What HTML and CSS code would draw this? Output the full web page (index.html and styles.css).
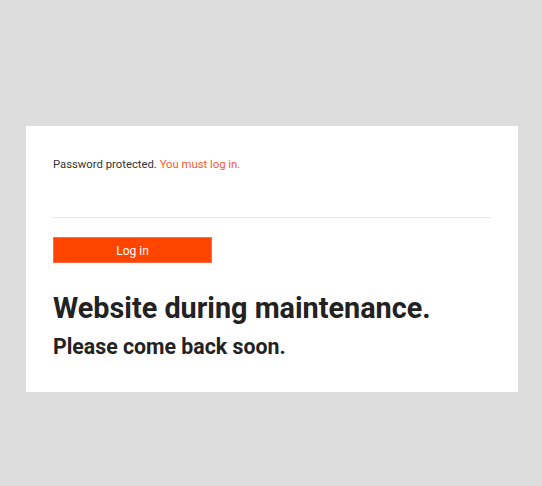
FILE: index.html
```html
<!DOCTYPE html>
<html lang="en">
<head>
    <meta charset="UTF-8">
    <meta name="viewport" content="width=device-width, initial-scale=1.0">
    <title>Maintenance</title>
    <link rel="stylesheet" href="styles.css">
</head>
<body>
    <div class="card">
        <p class="notice">Password protected. <a href="#" class="notice-link">You must log in.</a></p>
        <hr class="divider">
        <button class="login-btn">Log in</button>
        <h1>Website during maintenance.</h1>
        <h2>Please come back soon.</h2>
    </div>
</body>
</html>
```

FILE: styles.css
```css
* {
    margin: 0;
    padding: 0;
    box-sizing: border-box;
}

body {
    font-family: Roboto, 'Liberation Sans', sans-serif;
    background-color: #dddddd;
    color: #222222;
    padding: 126px 24px 0 26px;
}

.card {
    width: 492px;
    background: white;
    padding: 29px 27px 33px;
}

.notice {
    font-size: 11.3px;
    line-height: 20px;
    color: #333;
}

.notice-link {
    color: #ff5630;
    text-decoration: none;
}

.divider {
    border: none;
    border-top: 1px solid #e8e8e8;
    margin-top: 42px;
}

.login-btn {
    display: block;
    margin-top: 19px;
    width: 159px;
    height: 26px;
    padding-top: 2px;
    background: #ff4500;
    border: 1px solid #ff6a40;
    color: white;
    font-family: Roboto, 'Liberation Sans', sans-serif;
    font-size: 12px;
    cursor: pointer;
}

h1 {
    margin-top: 28px;
    font-size: 28.8px;
    line-height: 34px;
    font-weight: 700;
}

h2 {
    margin-top: 9px;
    font-size: 21.3px;
    line-height: 25px;
    font-weight: 700;
}
```
